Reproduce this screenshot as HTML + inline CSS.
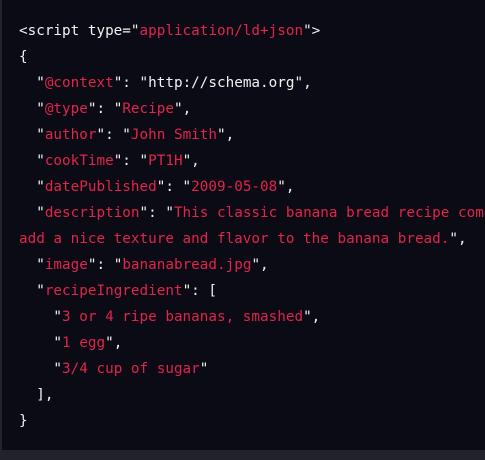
<!DOCTYPE html>
<html><head><style>
html,body{margin:0;padding:0;}
body{width:485px;height:460px;background:#0a0b14;position:relative;overflow:hidden;}
.l{position:absolute;left:0;top:0;width:2px;height:450px;background:#22232c;}
.b{position:absolute;left:0;top:450px;width:485px;height:10px;background:#21222b;}
pre{position:absolute;left:19px;top:18px;margin:0;font-family:"DejaVu Sans Mono","Liberation Mono",monospace;font-size:14.3px;line-height:26px;color:#f2f2f2;white-space:pre;}
.r{color:#e3234c;}
</style></head><body>
<div class="l"></div>
<pre>&lt;script type="<span class="r">application/ld+json</span>"&gt;
{
  "<span class="r">@context</span>": "http://schema.org",
  "<span class="r">@type</span>": "<span class="r">Recipe</span>",
  "<span class="r">author</span>": "<span class="r">John Smith</span>",
  "<span class="r">cookTime</span>": "<span class="r">PT1H</span>",
  "<span class="r">datePublished</span>": "<span class="r">2009-05-08</span>",
  "<span class="r">description</span>": "<span class="r">This classic banana bread recipe comes
add a nice texture and flavor to the banana bread.</span>",
  "<span class="r">image</span>": "<span class="r">bananabread.jpg</span>",
  "<span class="r">recipeIngredient</span>": [
    "<span class="r">3 or 4 ripe bananas, smashed</span>",
    "<span class="r">1 egg</span>",
    "<span class="r">3/4 cup of sugar</span>"
  ],
}</pre>
<div class="b"></div>
</body></html>
